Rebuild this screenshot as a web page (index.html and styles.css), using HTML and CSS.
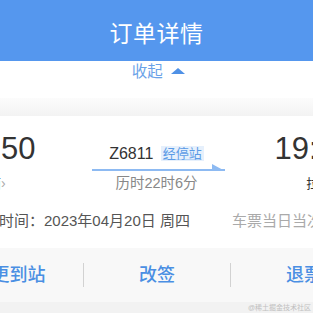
FILE: index.html
```html
<!DOCTYPE html>
<html lang="zh-CN">
<head>
  <meta charset="UTF-8">
  <title>订单详情</title>
  <link rel="stylesheet" href="styles.css">
</head>
<body>
  <div class="page">
    <div class="title-bar">订单详情</div>
    <div class="collapse">收起 <span class="caret"></span></div>
    <div class="band"></div>

    <div class="trip">
      <div class="stop stop-from">
        <div class="time">18:50</div>
        <div class="station">北京西<span class="chev">›</span></div>
      </div>
      <div class="train">
        <div class="train-no">Z6811 <span class="badge">经停站</span></div>
        <svg class="arrow" width="133" height="7" viewBox="0 0 133 7">
          <rect x="0" y="5" width="133" height="2" fill="#8dbaf2"/>
          <polygon points="120,0 133,7 120,7" fill="#8dbaf2"/>
        </svg>
        <div class="duration">历时22时6分</div>
      </div>
      <div class="stop stop-to">
        <div class="time">19:56</div>
        <div class="station">拉萨西<span class="chev">›</span></div>
      </div>
    </div>

    <div class="date-row">
      <span class="date">出发时间：2023年04月20日 周四</span>
      <span class="note">车票当日当次有效</span>
    </div>

    <div class="actions">
      <div class="action">变更到站</div>
      <div class="action">改签</div>
      <div class="action">退票</div>
    </div>
    <div class="footer">@稀土掘金技术社区</div>
  </div>
</body>
</html>
```
FILE: styles.css
```css
html, body {
  margin: 0;
  padding: 0;
  width: 313px;
  height: 313px;
  overflow: hidden;
  background-color: #fff;
  font-family: "Liberation Sans", "Noto Sans CJK SC", sans-serif;
}
.page {
  width: 313px;
  height: 313px;
  overflow: hidden;
}
.title-bar {
  height: 61px;
  display: flex;
  align-items: center;
  justify-content: center;
  background-color: #5597ee;
  color: #fff;
  font-size: 23px;
  letter-spacing: 0.5px;
  padding-top: 2px;
  box-sizing: border-box;
}
.collapse {
  height: 37px;
  box-sizing: border-box;
  padding-top: 2px;
  padding-left: 4px;
  text-align: center;
  font-size: 15.5px;
  line-height: 18px;
  color: #6aa2e8;
}
.caret {
  display: inline-block;
  width: 0;
  height: 0;
  margin-left: 4px;
  border-left: 7px solid transparent;
  border-right: 7px solid transparent;
  border-bottom: 6px solid #4f91e6;
  vertical-align: 3px;
}
.band {
  height: 18px;
  background: linear-gradient(#fcfcfc, #f3f3f3);
}
.trip {
  width: 441px;
  margin-left: -64px;
  display: grid;
  grid-template-columns: 147px 147px 147px;
  padding-top: 16px;
}
.time {
  font-size: 31px;
  line-height: 34px;
  color: #333;
}
.station {
  margin-top: 8px;
  font-size: 13px;
  line-height: 18px;
  color: #333;
}
.chev {
  color: #aaa;
  font-size: 14px;
}
.stop-from {
  padding-left: 22px;
}
.stop-from .station {
  margin-left: 4px;
}
.stop-to {
  text-align: right;
  padding-right: 25px;
}
.stop-to .station {
  margin-right: 2px;
}
.train {
  text-align: center;
  padding-top: 12px;
}
.train-no {
  font-size: 16px;
  line-height: 20px;
  color: #333;
}
.badge {
  display: inline-block;
  margin-left: 3px;
  padding: 0 2px;
  background-color: #e6f0fc;
  color: #5b9be6;
  font-size: 13px;
  line-height: 15px;
  text-decoration: underline;
  text-decoration-color: #b5d2f5;
  vertical-align: 1px;
}
.arrow {
  display: block;
  margin: 0 auto;
  position: relative;
  left: 2px;
}
.duration {
  margin-top: 3px;
  font-size: 14.5px;
  line-height: 18px;
  color: #888;
}
.date-row {
  margin-top: 18px;
  margin-left: -31px;
  display: flex;
  gap: 42px;
  font-size: 15px;
  line-height: 20px;
  white-space: nowrap;
}
.date {
  color: #555;
}
.note {
  color: #aaa;
}
.actions {
  width: 441px;
  margin-left: -64px;
  margin-top: 17px;
  height: 54px;
  display: grid;
  grid-template-columns: 147px 147px 147px;
  align-items: center;
  background-color: #f8f8f8;
}
.action {
  text-align: center;
  font-size: 18px;
  line-height: 24px;
  font-weight: 500;
  color: #4a8fe3;
  border-left: 1.5px solid #d2d2d2;
}
.action:first-child {
  border-left: none;
}
.footer {
  height: 11px;
  background-color: #f2f2f2;
  text-align: right;
  padding-right: 2px;
  font-size: 7px;
  line-height: 11px;
  color: #c0c0c0;
}
```
